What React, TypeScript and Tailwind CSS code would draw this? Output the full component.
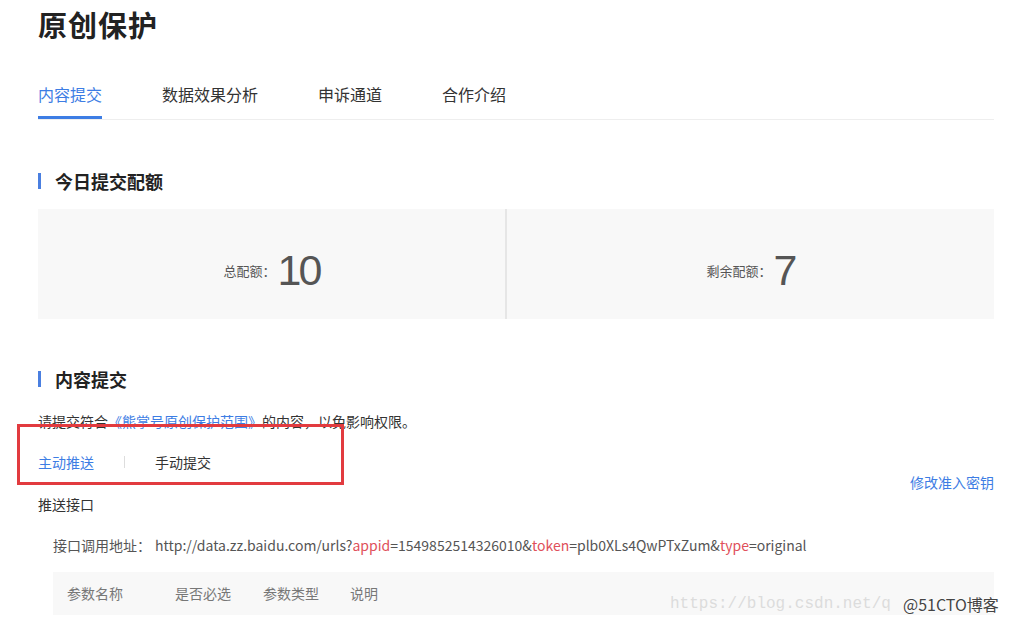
import React from 'react';

const font = { fontFamily: '"Noto Sans CJK SC", "Noto Sans", sans-serif' };

const SectionTitle: React.FC<{ title: string }> = ({ title }) => (
  <div className="flex items-center h-[24px]">
    <div className="w-[3px] h-[16px] bg-[#4a7fe0]"></div>
    <h2 className="ml-[14px] text-[18px] font-bold text-[#222] leading-[24px]">{title}</h2>
  </div>
);

const App: React.FC = () => {
  const tabs = ['内容提交', '数据效果分析', '申诉通道', '合作介绍'];
  const quota = [
    { label: '总配额：', value: '10' },
    { label: '剩余配额：', value: '7' },
  ];
  const cols = ['参数名称', '是否必选', '参数类型', '说明'];
  const colWidths = ['w-[108px]', 'w-[88px]', 'w-[87px]', 'w-[60px]'];

  return (
    <div className="relative w-[1011px] h-[623px] overflow-hidden bg-white" style={font}>
      <div className="pl-[38px] w-[994px]">
        {/* Page title */}
        <h1 className="pt-[5px] text-[29px] font-bold text-[#222] leading-[38px] tracking-[1px]">原创保护</h1>

        {/* Tabs */}
        <div className="mt-[40px] flex border-b border-[#eee]">
          {tabs.map((t, i) => (
            <div
              key={t}
              className={`text-[16px] leading-[22px] pb-[11px] mr-[60px] border-b-[3px] ${
                i === 0 ? 'text-[#3d7de4] border-[#3d7de4]' : 'text-[#333] border-transparent'
              }`}
            >
              {t}
            </div>
          ))}
        </div>

        {/* Quota */}
        <div className="mt-[49px]">
          <SectionTitle title="今日提交配额" />
        </div>
        <div className="mt-[16px] flex h-[110px] bg-[#f8f8f8]">
          {quota.map((q, i) => (
            <div
              key={q.label}
              className={`flex items-center justify-center pt-[12px] ${
                i === 0 ? 'w-[469px] border-r-[2px] border-[#e6e6e6]' : 'flex-1'
              }`}
            >
              <span className="text-[13px] text-[#555] mt-[2px]">{q.label}</span>
              <span
                className="ml-[2px] text-[43px] text-[#555] leading-none tracking-[-3px]"
                style={{ fontFamily: '"Liberation Sans", Arial, sans-serif' }}
              >
                {q.value}
              </span>
            </div>
          ))}
        </div>

        {/* Content submit */}
        <div className="mt-[48px]">
          <SectionTitle title="内容提交" />
        </div>
        <p className="mt-[20px] text-[14px] leading-[20px] text-[#333]">
          请提交符合<span className="text-[#3d7de4]">《熊掌号原创保护范围》</span>的内容，以免影响权限。
        </p>

        <div className="mt-[21px] flex items-center text-[14px] leading-[20px]">
          <span className="text-[#3d7de4]">主动推送</span>
          <span className="ml-[30px] w-px h-[12px] bg-[#ddd]"></span>
          <span className="ml-[30px] text-[#333]">手动提交</span>
        </div>

        <div className="flex justify-end text-[14px] leading-[20px]">
          <span className="text-[#3d7de4]">修改准入密钥</span>
        </div>
        <div className="mt-[2px] text-[14px] leading-[20px] text-[#333]">推送接口</div>

        <div className="mt-[21px] pl-[15px] text-[14px] leading-[20px] text-[#555]">
          接口调用地址：
          <span className="ml-[4px]">
            http://data.zz.baidu.com/urls?<span className="text-[#e0505a]">appid</span>=1549852514326010&amp;
            <span className="text-[#e0505a]">token</span>=plb0XLs4QwPTxZum&amp;
            <span className="text-[#e0505a]">type</span>=original
          </span>
        </div>

        <div className="mt-[17px] ml-[15px] flex items-center h-[43px] bg-[#f8f8f8] pl-[14px] text-[14px] text-[#777]">
          {cols.map((c, i) => (
            <span key={c} className={colWidths[i]}>
              {c}
            </span>
          ))}
        </div>
      </div>

      {/* Annotation box */}
      <div className="absolute left-[17px] top-[424px] w-[327px] h-[61px] border-[3px] border-[#e23b3f]"></div>

      {/* Watermarks */}
      <div
        className="absolute left-[670px] top-[593px] whitespace-nowrap text-[16px] text-[#dcdcdc] leading-[22px]"
        style={{ fontFamily: '"Liberation Mono", monospace' }}
      >
        https://blog.csdn.net/q
      </div>
      <div
        className="absolute left-[903px] top-[593px] text-[16px] text-[#444] leading-[22px]"
        style={{ textShadow: '0 0 2px #fff, 0 0 2px #fff' }}
      >
        @51CTO博客
      </div>
    </div>
  );
};

export default App;
